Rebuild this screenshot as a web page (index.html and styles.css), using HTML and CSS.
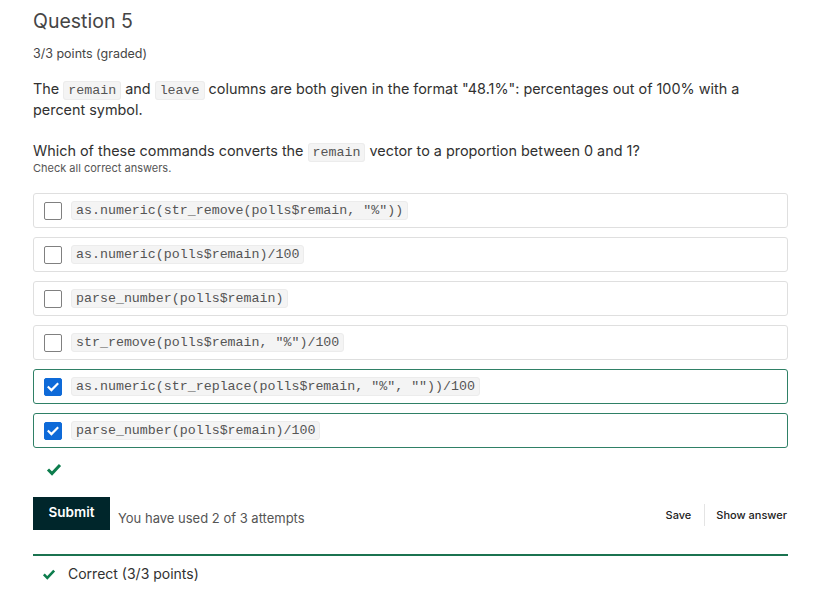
FILE: index.html
```html
<!DOCTYPE html>
<html>
<head>
<meta charset="utf-8">
<link rel="stylesheet" href="styles.css">
</head>
<body>
<div class="problem">
  <h2 class="title">Question 5</h2>
  <div class="points">3/3 points (graded)</div>
  <p class="para">The <code>remain</code> and <code>leave</code> columns are both given in the format "48.1%": percentages out of 100% with a percent symbol.</p>
  <p class="question">Which of these commands converts the <code>remain</code> vector to a proportion between 0 and 1?</p>
  <div class="hint">Check all correct answers.</div>
  <div class="options">
    <label class="option"><span class="box"></span><code>as.numeric(str_remove(polls$remain, "%"))</code></label>
    <label class="option"><span class="box"></span><code>as.numeric(polls$remain)/100</code></label>
    <label class="option"><span class="box"></span><code>parse_number(polls$remain)</code></label>
    <label class="option"><span class="box"></span><code>str_remove(polls$remain, "%")/100</code></label>
    <label class="option selected"><span class="box checked"><svg viewBox="0 0 18 18" width="18" height="18"><path d="M4 9.3l3.2 3.2L14 5.6" fill="none" stroke="#fff" stroke-width="2.4" stroke-linecap="square"/></svg></span><code>as.numeric(str_replace(polls$remain, "%", ""))/100</code></label>
    <label class="option selected"><span class="box checked"><svg viewBox="0 0 18 18" width="18" height="18"><path d="M4 9.3l3.2 3.2L14 5.6" fill="none" stroke="#fff" stroke-width="2.4" stroke-linecap="square"/></svg></span><code>parse_number(polls$remain)/100</code></label>
  </div>
  <div class="status"><svg viewBox="0 0 16 14" width="16" height="14"><path d="M2 7.5l4 4L14 3" fill="none" stroke="#0d7d4d" stroke-width="3"/></svg></div>
  <div class="actions">
    <button class="submit">Submit</button>
    <span class="attempts">You have used 2 of 3 attempts</span>
    <div class="links">
      <span class="link">Save</span>
      <span class="sep"></span>
      <span class="link">Show answer</span>
    </div>
  </div>
  <div class="notice">
    <svg viewBox="0 0 16 14" width="14" height="12"><path d="M2 7.5l4 4L14 3" fill="none" stroke="#0d7d4d" stroke-width="3"/></svg>
    <span>Correct (3/3 points)</span>
  </div>
</div>
</body>
</html>
```
FILE: styles.css
```css
html, body {
  margin: 0;
  padding: 0;
  background: #fff;
}
body {
  font-family: Inter, "Noto Sans", sans-serif;
  color: #313131;
}
.problem {
  width: 755px;
  margin-left: 33px;
  padding-top: 9px;
  display: flex;
  flex-direction: column;
}
.title {
  font-size: 19.5px;
  line-height: 24px;
  font-weight: 400;
  color: #454545;
  margin: 0;
}
.points {
  font-size: 12.5px;
  line-height: 16px;
  color: #454545;
  margin-top: 13px;
}
.para {
  font-size: 14.4px;
  line-height: 21px;
  margin: 16px 0 0;
  width: 720px;
}
.question {
  font-size: 14.4px;
  line-height: 21px;
  margin: 20px 0 0;
}
.hint {
  font-size: 11px;
  line-height: 14px;
  color: #555;
  margin-top: 0;
}
code {
  font-family: "Liberation Mono", "Courier New", monospace;
  font-size: 13.3px;
  line-height: 14px;
  background: #f4f4f4;
  border: 1px solid #ececec;
  border-radius: 3px;
  padding: 1px 4px;
  color: #555;
}
.options {
  margin-top: 18px;
  display: flex;
  flex-direction: column;
  gap: 9px;
}
.option {
  height: 35px;
  box-sizing: border-box;
  border: 1px solid #dfdfdf;
  border-radius: 3px;
  display: flex;
  align-items: center;
  padding-left: 10px;
  gap: 9px;
}
.option code {
  line-height: 15px;
}
.option.selected {
  border-color: #2f8066;
}
.box {
  width: 18px;
  height: 18px;
  box-sizing: border-box;
  border: 1px solid #808080;
  border-radius: 2px;
  background: #fff;
  display: flex;
  align-items: center;
  justify-content: center;
}
.box.checked {
  background: #0e6ad8;
  border-color: #0e6ad8;
}
.box svg {
  display: block;
}
.status {
  margin-top: 14px;
  padding-left: 13px;
  height: 14px;
}
.status svg {
  display: block;
}
.actions {
  margin-top: 21px;
  display: flex;
  align-items: center;
}
.submit {
  font-family: Inter, "Noto Sans", sans-serif;
  font-size: 13.5px;
  font-weight: 600;
  color: #fff;
  background: #00262b;
  border: none;
  border-radius: 0;
  width: 77px;
  height: 33px;
  padding: 0 0 3px;
}
.attempts {
  font-size: 13px;
  color: #555;
  margin-left: 8px;
  padding-top: 9px;
}
.links {
  margin-left: auto;
  display: flex;
  align-items: center;
  font-size: 11px;
  font-weight: 500;
  color: #222;
  padding-top: 3px;
  margin-right: 1px;
}
.sep {
  width: 1px;
  height: 22px;
  background: #e4e4e4;
  margin: 0 11px 0 13px;
}
.notice {
  margin-top: 24px;
  border-top: 2px solid #1b7350;
  padding: 9px 0 0 9px;
  display: flex;
  align-items: center;
  gap: 12px;
  font-size: 14px;
  color: #313131;
}
.notice svg {
  display: block;
}
```
